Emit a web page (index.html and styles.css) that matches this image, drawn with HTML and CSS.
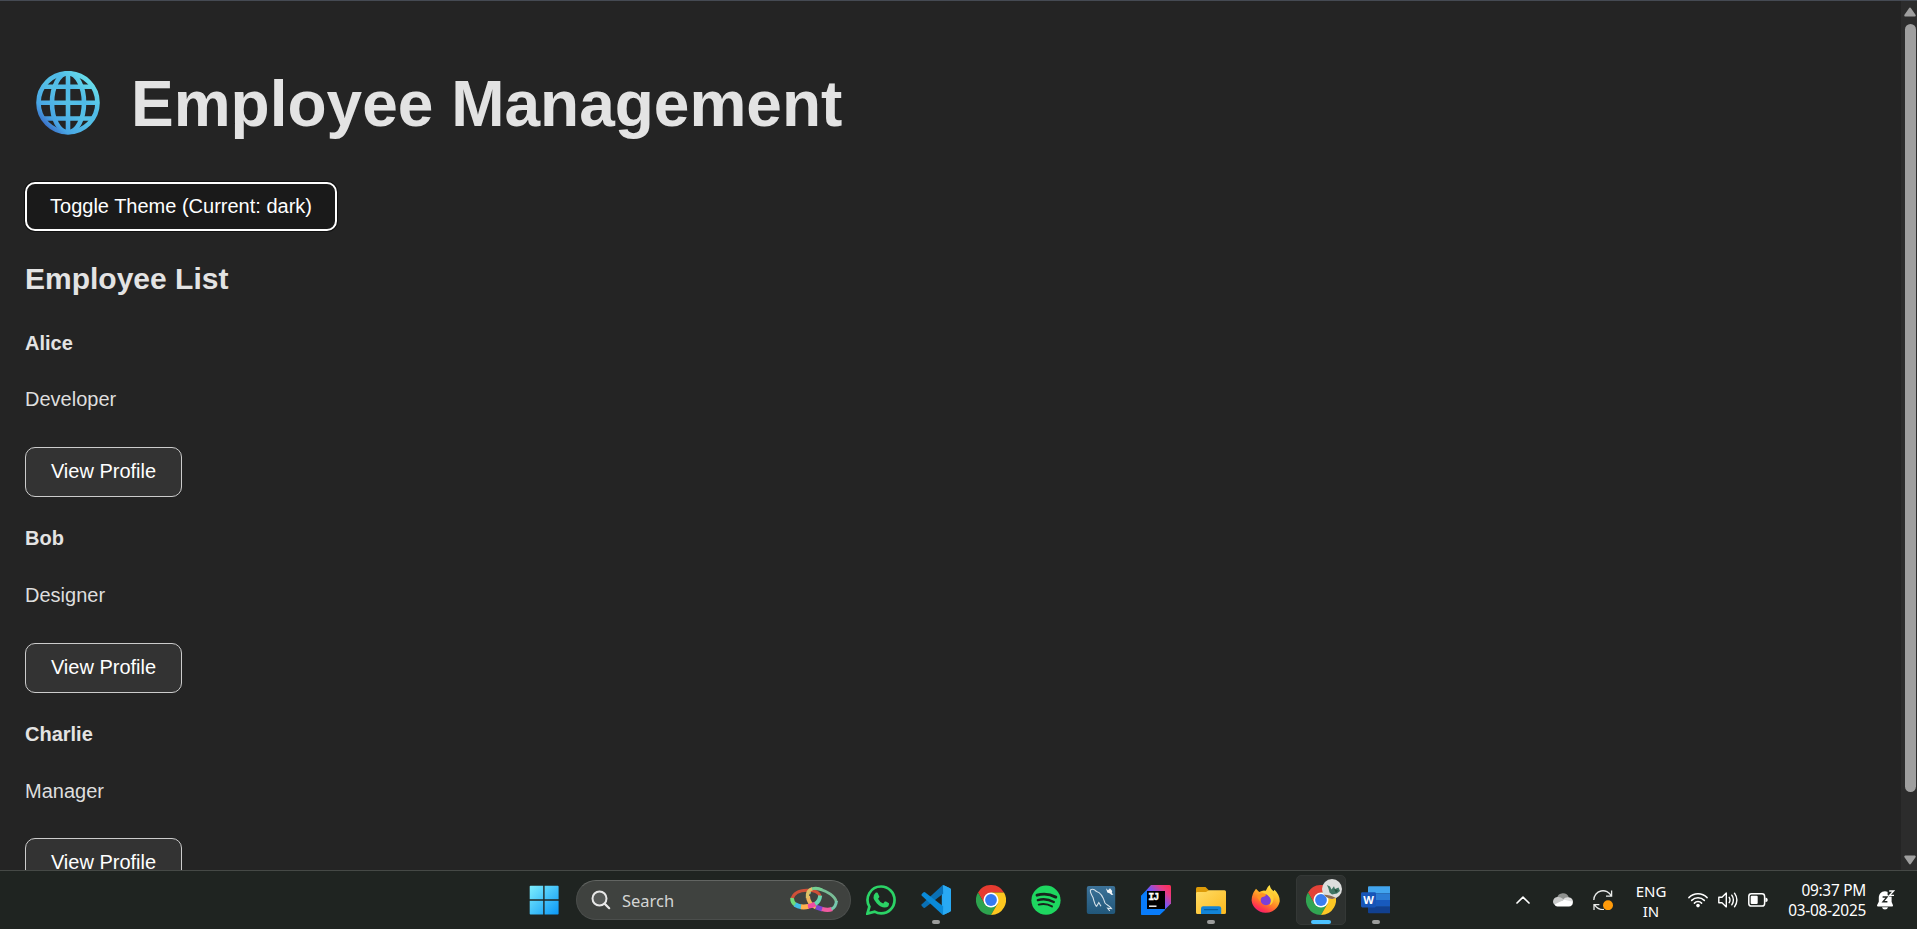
FILE: index.html
```html
<!DOCTYPE html>
<html lang="en">
<head>
<meta charset="utf-8">
<title>Employee Management</title>
<link rel="stylesheet" href="styles.css">
</head>
<body>
<div class="screen">
  <div class="viewport">
    <main class="page">
      <h1 class="title">
        <svg class="globe" viewBox="0 0 64 64"><defs><linearGradient id="gl" gradientUnits="userSpaceOnUse" x1="54" y1="10" x2="10" y2="54"><stop offset="0" stop-color="#67dcea"/><stop offset=".3" stop-color="#4fb9e6"/><stop offset=".5" stop-color="#55c0e6"/><stop offset=".85" stop-color="#48a5e4"/><stop offset="1" stop-color="#3d76cc"/></linearGradient></defs><g fill="none" stroke="url(#gl)" stroke-width="4.6"><circle cx="32" cy="31.7" r="29.5"/><ellipse cx="32" cy="31.7" rx="16" ry="29.5"/><path d="M32 2V61M2 31.7H62M8 15.7H56M8 47.5H56"/></g></svg>
        <span>Employee Management</span>
      </h1>
      <button class="toggle">Toggle Theme (Current: dark)</button>
      <h2 class="heading">Employee List</h2>
      <section class="employee"><h4 class="name">Alice</h4><p class="role">Developer</p><button class="profile">View Profile</button></section>
      <section class="employee"><h4 class="name">Bob</h4><p class="role">Designer</p><button class="profile">View Profile</button></section>
      <section class="employee"><h4 class="name">Charlie</h4><p class="role">Manager</p><button class="profile">View Profile</button></section>
    </main>
    <div class="scrollbar">
      <svg class="arrow" viewBox="0 0 12 10"><path d="M6 .5Q6.6 .5 7 1.2L11.7 8Q12 9.5 10.8 9.5H1.2Q0 9.5 .3 8L5 1.2Q5.4 .5 6 .5Z" fill="#9f9f9f"/></svg>
      <div class="thumb"></div>
      <svg class="arrow arrow-down" viewBox="0 0 12 10"><path d="M6 9.5Q6.6 9.5 7 8.8L11.7 2Q12 .5 10.8 .5H1.2Q0 .5 .3 2L5 8.8Q5.4 9.5 6 9.5Z" fill="#9f9f9f"/></svg>
    </div>
  </div>

  <footer class="taskbar">
    <div class="slot"><svg class="icon" viewBox="0 0 30 30"><defs><linearGradient id="wn" x1="0" y1="0" x2="1" y2="1" ><stop offset="0" stop-color="#7deefd"/><stop offset="1" stop-color="#0a97f5"/></linearGradient></defs><path fill="url(#wn)" d="M1.5 .8H14.2V14.3H.7V1.6Q.7 .8 1.5 .8ZM15.6 .8H28.8Q29.6 .8 29.6 1.6V14.3H15.6ZM.7 15.7H14.2V29.6H1.5Q.7 29.6 .7 28.8ZM15.6 15.7H29.6V28.8Q29.6 29.6 28.8 29.6H15.6Z"/></svg></div>
    <div class="search">
      <svg class="search-icon" viewBox="0 0 20 20"><circle cx="8.5" cy="8.5" r="7" fill="#565957" stroke="#e8e8e8" stroke-width="2"/><path d="M13.6 13.6L18.2 18.2" stroke="#e8e8e8" stroke-width="2.2" stroke-linecap="round"/></svg>
      <span class="search-text">Search</span>
      <svg class="rings" viewBox="0 0 48 28">
        <g fill="none">
          <path d="M19 8C19.5 3.5 25 1.8 31 3.6S45 10 46.4 16" stroke="#79bd97" stroke-width="2.8"/>
          <path d="M18 10C18 16 22 19.5 26 21.5" stroke="#f2b25c" stroke-width="4"/>
          <path d="M26 21L32.5 23.2" stroke="#7b45d0" stroke-width="4.6"/>
          <path d="M32 23Q38 24.8 42 23" stroke="#f05aa0" stroke-width="4.4"/>
          <path d="M41.5 23.2Q46 21 46.4 15" stroke="#76c7ad" stroke-width="3"/>
          <path d="M2 13C3.5 7 10 4.4 17 4.2S29 6.5 30 10" stroke="#cf5038" stroke-width="3"/>
          <path d="M2.2 12Q1.8 16.5 5.6 18.8" stroke="#6fdc7b" stroke-width="3.8"/>
          <path d="M5 18.4Q8 20.4 11.5 20.8" stroke="#41bde5" stroke-width="4.8"/>
          <path d="M11 20.8Q15 21.2 18.5 20.4" stroke="#ffb04e" stroke-width="5"/>
          <path d="M18 20.5Q22 19.8 25.6 17.8" stroke="#ed4ca4" stroke-width="4.8"/>
          <path d="M25.2 18Q29.5 15.5 30.2 9.5" stroke="#69d6b2" stroke-width="4"/>
          <path d="M17.5 12C17 6.5 19.2 3.5 22.5 2.6" stroke="#dfc167" stroke-width="3.4"/>
          <path d="M22 2.8Q27 1.2 32 3.7" stroke="#74cf91" stroke-width="2.8"/>
        </g>
      </svg>
    </div>
    <nav class="apps">
      <div class="slot"><svg class="icon" viewBox="0 0 30 30"><path d="M15.1 1.5A13.4 13.4 0 0 1 15.1 28.4Q11.7 28.4 8.6 26.6L1.4 28.6L3.4 21.6A13.4 13.4 0 0 1 15.1 1.5Z" fill="none" stroke="#2bd366" stroke-width="2.7"/><path d="M9.6 7.8Q10.7 7.1 11.6 7.8L13.4 11.8Q13.2 12.7 12 13.7Q13.6 17 17.2 18.4L18.8 16.6Q19.4 16.3 20 16.6L23 18.2Q23.4 22.4 18.7 22.6Q14.7 22.6 10.9 18.6Q4.8 12.2 9.6 7.8Z" fill="#2bd366"/></svg></div>
      <div class="slot"><svg class="icon" viewBox="0 0 30 30"><path d="M21.8 0L29 3.2Q30 3.7 30 5V25Q30 26.3 29 26.8L21.8 30L20.8 23.5V6.5Z" fill="#25a8f2"/><path d="M21.8 0L.8 19.2Q0 20.2 .8 21.1L2.6 22.7Q3.5 23.2 4.3 22.6L22.4 8.5Z" fill="#0a70b5"/><path d="M21.8 30L.8 10.8Q0 9.8 .8 8.9L2.6 7.3Q3.5 6.8 4.3 7.4L22.4 21.5Z" fill="#0a8ad8"/><path d="M22.4 0L29 3.2Q30 3.7 30 5V25Q30 26.3 29 26.8L22.4 30Z" fill="#29a9f3"/></svg><i class="dot"></i></div>
      <div class="slot"><svg class="icon" viewBox="0 0 30 30"><path d="M2 7.5A15 15 0 0 1 28 7.5H15L8.5 18.75Z" fill="#e53b30"/><path d="M2 7.5A15 15 0 0 0 15 30L21.5 18.75H8.5Z" fill="#2da34e"/><path d="M28 7.5A15 15 0 0 1 15 30L21.5 18.75L15 7.5Z" fill="#fcc71f"/><circle cx="15" cy="15" r="7.5" fill="#fff"/><circle cx="15" cy="15" r="5.9" fill="#347af1"/></svg></div>
      <div class="slot"><svg class="icon" viewBox="0 0 30 30"><circle cx="15" cy="15.2" r="14.6" fill="#1ed760"/><g fill="none" stroke="#18231d" stroke-linecap="round"><path d="M6 10.2Q15.8 7.4 24.8 12.1" stroke-width="2.9"/><path d="M6.9 15.1Q15.1 12.8 22.8 17" stroke-width="2.4"/><path d="M7.7 19.6Q14.8 17.7 21 21.4" stroke-width="1.9"/></g></svg></div>
      <div class="slot"><svg class="icon" viewBox="0 0 30 30"><defs><linearGradient id="my" x2="0" y2="1"><stop stop-color="#3c7298"/><stop offset="1" stop-color="#21577a"/></linearGradient></defs><rect x=".8" y="1" width="28.4" height="28" rx="2" fill="url(#my)"/><path d="M10.5 21.5C8 19 8 15.5 7 12.5C5 9 3.8 6.5 4.5 5C6 3.8 8.5 4.5 10.5 6.5C15 7.5 17.5 13 19 18C20.5 20 23.5 20.8 25.5 23.5L21.6 23.2L23.8 26M10.5 21.5L12.8 17.5L15 21.3" fill="none" stroke="#d6e2ea" stroke-width="1.1"/><path d="M20 3.2L22 5.2L24 3.3L26.2 6L25.8 8L27.4 9.6L25.6 10L23.5 8.3L21.3 7.5Z" fill="#f5f7f8"/></svg></div>
      <div class="slot"><svg class="icon" viewBox="0 0 30 30"><defs><linearGradient id="ij" x1="1" y1="0" x2=".1" y2=".9"><stop stop-color="#ff2d50"/><stop offset=".22" stop-color="#e93b82"/><stop offset=".5" stop-color="#6b57ff"/><stop offset=".6" stop-color="#087cfa"/></linearGradient></defs><path d="M10 0H28.5Q30 0 30 1.5V18.5L18.5 30H1.5Q0 30 0 28.5V11Z" fill="url(#ij)"/><path d="M0 11L5 6V25H24L18.5 30H1.5Q0 30 0 28.5Z" fill="#087cfa"/><rect x="6" y="6" width="18" height="18"/><path d="M8 21.2H15.5" stroke="#fff" stroke-width="1.4"/><text x="7.2" y="15.3" class="ij-text">IJ</text></svg></div>
      <div class="slot"><svg class="icon" viewBox="0 0 30 30"><defs><linearGradient id="fo" x2="1" y2="1"><stop stop-color="#ffdc65"/><stop offset="1" stop-color="#fcb91e"/></linearGradient></defs><path d="M1.5 2H9.5L13 5.6V9H0V3.5Q0 2 1.5 2Z" fill="#dd9b08"/><path d="M0 8.2Q0 7.3 1 7H10L13 5.2H28.5Q30 5.2 30 6.7V27.5Q30 29 28.5 29H1.5Q0 29 0 27.5Z" fill="url(#fo)"/><path d="M5 29V23.5Q5 21.2 7.2 21.2H23Q25.2 21.2 25.2 23.5V29Z" fill="#1284d8"/><path d="M8.5 24.6H21.5" stroke="#075f9f" stroke-width="1.3" stroke-linecap="round"/></svg><i class="dot"></i></div>
      <div class="slot"><svg class="icon" viewBox="0 0 30 30"><defs><linearGradient id="ff" x1=".8" y1="0" x2=".25" y2="1"><stop stop-color="#fff44f"/><stop offset=".35" stop-color="#ffbd2b"/><stop offset=".62" stop-color="#ff7b26"/><stop offset=".85" stop-color="#ff3350"/><stop offset="1" stop-color="#ee1a7b"/></linearGradient></defs><path d="M5 3.8L8.2 7Q12 4.8 14.8 5.8Q16 2 18.6 0Q19.5 4 22.5 6.2L23.5 4.7Q29 10 28.7 16.5A14.2 13.7 0 0 1 .6 15.5Q.5 9.5 5 3.8Z" fill="url(#ff)"/><circle cx="15" cy="14.7" r="5.5" fill="#7b3fd8"/><path d="M9 8.8Q12 7.4 15.5 9.8Q13.7 12 10.8 12.2Q9 13.6 9.4 17L6 12Z" fill="#ff9322"/><path d="M10.5 6.7Q20 4 22.5 12Q23 18 18.5 20.4Q21 15.5 18.8 12.5Q16.5 9 10.5 6.7Z" fill="#ffcf36"/></svg></div>
      <div class="slot slot-active"><svg class="icon" viewBox="0 0 30 30"><path d="M2 7.5A15 15 0 0 1 28 7.5H15L8.5 18.75Z" fill="#e34238"/><path d="M2 7.5A15 15 0 0 0 15 30L21.5 18.75H8.5Z" fill="#31a552"/><path d="M28 7.5A15 15 0 0 1 15 30L21.5 18.75L15 7.5Z" fill="#fcc724"/><circle cx="15" cy="15" r="7.5" fill="#fff"/><circle cx="15" cy="15" r="5.9" fill="#397df0"/></svg>
        <svg class="avatar" viewBox="0 0 20 20"><circle cx="10" cy="10" r="10" fill="#dcdedd"/><path d="M2 15.8A10 10 0 0 0 14 19.1Q7 15.6 2 15.8Z" fill="#8a6a51"/><path d="M5 6L8 7.5L9.5 10.5L12 7.2L13 10L16.5 8.5L18 12L15 14.6L10 15.5L7.5 13.5L6.5 9.5Z" fill="#3f7564"/><path d="M12 10L16 11.3L14 14Z" fill="#24503f"/></svg>
        <i class="dot dot-active"></i></div>
      <div class="slot"><svg class="icon" viewBox="0 0 30 30"><path d="M7 2.3Q7 1.2 8 1.2H29V8.2H7Z" fill="#42a5ee"/><path d="M7 8.2H29V15H7Z" fill="#2b7cd3"/><path d="M7 15H29V21.8H7Z" fill="#185abd"/><path d="M7 21.8H29V28.2H8Q7 28.2 7 27.2Z" fill="#11408f"/><rect x="0" y="7.3" width="15" height="15.2" rx="1.4" fill="#1755b7"/><text x="7.5" y="18.7" text-anchor="middle" class="word-text">W</text></svg><i class="dot"></i></div>
    </nav>
    <div class="tray">
      <svg class="t-chevron" viewBox="0 0 14 8"><path d="M1 7L7 1.2L13 7" fill="none" stroke="#fff" stroke-width="1.7" stroke-linecap="round" stroke-linejoin="round"/></svg>
      <svg class="t-cloud" viewBox="0 0 20 14"><path d="M4 5A6.2 6.2 0 0 1 15.8 4.3L10 10L3 9Z" fill="#8e918f"/><path d="M4.2 4Q7.5 3.6 10.5 6.3L4 12.6Q0 12 0 8.6Q.2 4.8 4.2 4Z" fill="#c9cbca"/><path d="M10 6.6Q12 4 15.5 4.2Q20 5 20 9L15 11Z" fill="#dedfdf"/><path d="M1.5 11.5L11 6.8L19.8 8.8Q20.2 13.2 15.8 13.5H4.4Q2.3 13.3 1.5 11.5Z" fill="#fff"/></svg>
      <svg class="t-sync" viewBox="0 0 20 20"><path d="M.8 10A9.2 9.2 0 0 1 18.3 6M18.6 .6V6.2H13M1 20V14.6H6.4M1.6 14.8Q5 20 11 19.5" fill="none" stroke="#e9ebea" stroke-width="1.3"/><circle cx="15" cy="15.2" r="5" fill="#ff9b0a"/></svg>
      <div class="lang"><span>ENG</span><span>IN</span></div>
      <svg class="t-wifi" viewBox="0 0 20 16"><g fill="none" stroke="#fff" stroke-width="1.5" stroke-linecap="round"><path d="M.9 5.6A12.8 12.8 0 0 1 19.1 5.6M3.7 8.4A8.9 8.9 0 0 1 16.3 8.4M6.4 11.1A5.1 5.1 0 0 1 13.6 11.1"/></g><circle cx="10" cy="13.6" r="1.8" fill="#fff"/></svg>
      <svg class="t-sound" viewBox="0 0 20 16"><g fill="none" stroke="#fff" stroke-width="1.4" stroke-linecap="round" stroke-linejoin="round"><path d="M.8 5.2H4L8.3 1.1V14.9L4 10.8H.8Z"/><path d="M11.2 5.3Q12.8 8 11.2 10.7M13.8 3.2Q17 8 13.8 12.8M16.5 1.2Q21.3 8 16.5 14.8"/></g></svg>
      <svg class="t-battery" viewBox="0 0 20 14"><rect x=".8" y=".8" width="15.8" height="12.2" rx="2.6" fill="none" stroke="#fff" stroke-width="1.5"/><rect x="2.7" y="2.8" width="7" height="8.2" rx="1" fill="#fff"/><path d="M17.4 4.6Q19.8 5 19.8 6.9T17.4 9.2Z" fill="#fff"/></svg>
      <div class="clock"><span>09:37 PM</span><span>03-08-2025</span></div>
      <svg class="t-bell" viewBox="0 0 18 20"><path d="M8 1.2C4 1.2 1.8 4.4 1.8 8V11.8L0 15.2Q0 16.4 1 16.4H15Q16.2 16.4 16 15.2L14.6 12V4Q12 1.2 8 1.2ZM5 17.2H11Q10.5 19.6 8 19.6T5 17.2Z" fill="#fff"/><path d="M5.6 7H10L6 11.8H10.4" fill="none" stroke="#1f2421" stroke-width="1.4"/><path d="M10.6 0H18V6.6H12.4L10.6 5Z" fill="#1f2421"/><path d="M12.2 1H16.6L12.6 5.4H17" fill="none" stroke="#fff" stroke-width="1.3"/></svg>
    </div>
  </footer>
</div>
</body>
</html>
```
FILE: styles.css
```css
* { box-sizing: border-box; }
body { margin: 0; background: #242424; overflow: hidden; }
h1, h2, h4, p { margin: 0; }

.screen {
  display: flex;
  flex-direction: column;
  width: 1917px;
  height: 929px;
  font-family: "Liberation Sans", Arial, sans-serif;
}

.viewport {
  display: flex;
  height: 870px;
  border-top: 1px solid #454a53;
  overflow: hidden;
}
.page {
  flex: 1;
  height: 869px;
  padding: 68px 25px 0;
  overflow: hidden;
  color: #e3e3e3;
  font-size: 20px;
  line-height: 30px;
}
.title {
  display: flex;
  align-items: flex-start;
  gap: 31px;
  height: 113px;
  padding-left: 11px;
  font-size: 64px;
  line-height: 70px;
}
.globe { width: 64px; height: 64px; margin-top: 2px; }

button {
  display: block;
  margin: 0;
  font: 20px/23px "Liberation Sans", Arial, sans-serif;
  color: #fff;
  border-radius: 10px;
}
.toggle {
  width: 312px;
  height: 49px;
  padding: 0;
  background: #1a1a1a;
  border: 2px solid #fff;
  box-shadow: 0 0 0 1px #101010;
}
.heading { margin: 25px 0 27px; font-size: 30px; line-height: 45px; }
.employee { height: 196px; }
.employee:nth-of-type(1) { height: 195px; }
.name { margin-bottom: 26px; font-size: 20px; }
.role { margin-bottom: 33px; color: #dedede; }
.employee:nth-of-type(n+2) .name { margin-bottom: 27px; }
.employee:nth-of-type(3) .role { margin-bottom: 32px; }
.profile {
  width: 157px;
  height: 50px;
  padding: 0 0 1px;
  background: #333;
  border: 1px solid #ccc;
}

.scrollbar {
  display: flex;
  flex-direction: column;
  align-items: center;
  width: 16px;
  padding: 6px 0 5px 2px;
  background: #2c2c2c;
}
.arrow { flex: none; width: 12px; height: 10px; }
.thumb {
  width: 11px;
  height: 768px;
  margin-top: 7px;
  border-radius: 6px;
  background: #9f9f9f;
}
.arrow-down { margin-top: auto; }

.taskbar {
  display: flex;
  align-items: flex-start;
  height: 59px;
  padding: 4px 0 0 519px;
  background: #1f2421;
  border-top: 1px solid #454946;
  color: #fff;
  font-family: "Noto Sans", sans-serif;
}
.slot {
  position: relative;
  display: flex;
  justify-content: center;
  width: 50px;
  height: 50px;
  padding-top: 10px;
  border-radius: 5px;
}
.icon { width: 30px; height: 30px; }
.search {
  display: flex;
  align-items: center;
  width: 275px;
  height: 40px;
  margin: 5px 0 0 7px;
  padding: 0 12px 0 14px;
  border-radius: 20px;
  background: #3f423f;
  border: 1px solid #4b4e4c;
  border-top-color: #626562;
}
.search-icon { width: 20px; height: 20px; }
.search-text { margin-left: 11px; padding-top: 1px; color: #d4d5d4; font-size: 16.5px; line-height: 24px; }
.rings { width: 48px; height: 28px; margin-left: auto; }
.apps { display: flex; gap: 5px; margin-left: 5px; }
.slot-active { background: #2d312f; border: 1px solid #343836; padding-top: 9px; }
.dot {
  position: absolute;
  left: 21px;
  top: 45px;
  width: 8px;
  height: 4px;
  border-radius: 2px;
  background: #9b9d9c;
}
.dot-active { left: 14px; top: 44px; width: 20px; background: #4cc2ff; }
.avatar { position: absolute; left: 25px; top: 3px; width: 20px; height: 20px; }
.ij-text { fill: #fff; stroke: #fff; stroke-width: .3px; font: bold 10px "Liberation Mono", monospace; letter-spacing: -1px; }
.word-text { fill: #fff; font: bold 11px "Open Sans", sans-serif; }

.tray { display: flex; align-items: center; height: 50px; margin-left: 115px; }
.tray svg { flex: none; }
.t-chevron { width: 14px; height: 8px; }
.t-cloud { width: 20px; height: 14px; margin-left: 23px; }
.t-sync { width: 20px; height: 20px; margin-left: 20px; }
.lang, .clock { display: flex; flex-direction: column; padding-top: 2px; font-size: 15.4px; line-height: 20px; }
.lang { width: 40px; margin-left: 18px; align-items: center; font-size: 15px; }
.t-wifi { width: 20px; height: 16px; margin-left: 17px; }
.t-sound { width: 20px; height: 16px; margin-left: 10px; }
.t-battery { width: 20px; height: 14px; margin-left: 10px; }
.clock { width: 87px; margin-left: 11px; align-items: flex-end; white-space: nowrap; letter-spacing: -.25px; }
.t-bell { width: 18px; height: 20px; margin-left: 11px; }
```
